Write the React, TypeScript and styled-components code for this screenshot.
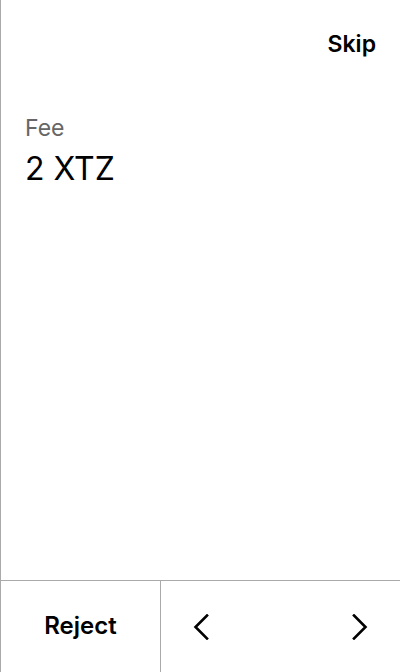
import React from "react";
import styled, { createGlobalStyle } from "styled-components";

const GlobalStyle = createGlobalStyle`
  html, body {
    margin: 0;
    padding: 0;
    background: #ffffff;
  }
  body {
    font-family: Inter, "Noto Sans", sans-serif;
    color: #000000;
  }
`;

const Screen = styled.div`
  width: 400px;
  height: 672px;
  box-sizing: border-box;
  border-left: 1px solid #aaaaaa;
  display: flex;
  flex-direction: column;
`;

const Header = styled.header`
  display: flex;
  justify-content: flex-end;
  padding: 31px 24px 0 0;
`;

const TextButton = styled.button<{ size?: number }>`
  border: none;
  background: none;
  padding: 0;
  font-family: inherit;
  font-size: ${(p) => p.size ?? 23}px;
  font-weight: 600;
  line-height: 26px;
  color: #000000;
  cursor: pointer;
`;

const Content = styled.main`
  flex: 1;
  padding: 57px 24px 0 24px;
  display: flex;
  flex-direction: column;
  gap: 8px;
`;

const Label = styled.div`
  font-size: 23px;
  color: #666666;
  line-height: 28px;
`;

const Value = styled.div`
  font-size: 32px;
  line-height: 38px;
  color: #000000;
`;

const Footer = styled.footer`
  height: 92px;
  box-sizing: border-box;
  border-top: 1px solid #aaaaaa;
  display: grid;
  grid-template-columns: 159px 1fr;
`;

const RejectCell = styled.div`
  display: flex;
  align-items: center;
  justify-content: center;
  padding-bottom: 2px;
`;

const NavCell = styled.div`
  border-left: 1px solid #aaaaaa;
  display: flex;
  justify-content: space-between;
  align-items: center;
`;

const NavButton = styled.button`
  width: 80px;
  height: 100%;
  border: none;
  background: none;
  padding: 0;
  display: flex;
  align-items: center;
  justify-content: center;
  cursor: pointer;
`;

const Chevron = ({ dir }: { dir: "left" | "right" }) => (
  <svg width="16" height="26" viewBox="0 0 16 26" fill="none">
    <polyline
      points={dir === "left" ? "14,1.5 2.5,13 14,24.5" : "2,1.5 13.5,13 2,24.5"}
      stroke="#000"
      strokeWidth="2.6"
      strokeLinecap="square"
      strokeLinejoin="miter"
    />
  </svg>
);

export default function App() {
  return (
    <>
      <GlobalStyle />
      <Screen>
        <Header>
          <TextButton>Skip</TextButton>
        </Header>
        <Content>
          <Label>Fee</Label>
          <Value>2 XTZ</Value>
        </Content>
        <Footer>
          <RejectCell>
            <TextButton size={24}>Reject</TextButton>
          </RejectCell>
          <NavCell>
            <NavButton aria-label="Previous">
              <Chevron dir="left" />
            </NavButton>
            <NavButton aria-label="Next">
              <Chevron dir="right" />
            </NavButton>
          </NavCell>
        </Footer>
      </Screen>
    </>
  );
}
